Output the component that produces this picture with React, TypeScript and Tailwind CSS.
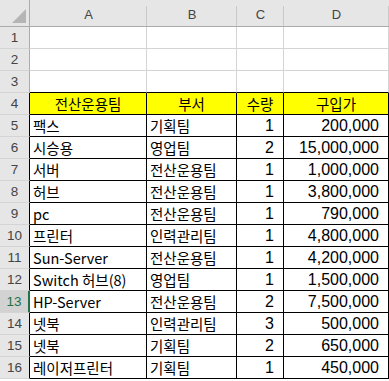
const rows: [string, string, string, string][] = [
  ["팩스", "기획팀", "1", "200,000"],
  ["시승용", "영업팀", "2", "15,000,000"],
  ["서버", "전산운용팀", "1", "1,000,000"],
  ["허브", "전산운용팀", "1", "3,800,000"],
  ["pc", "전산운용팀", "1", "790,000"],
  ["프린터", "인력관리팀", "1", "4,800,000"],
  ["Sun-Server", "전산운용팀", "1", "4,200,000"],
  ["Switch 허브(8)", "영업팀", "1", "1,500,000"],
  ["HP-Server", "전산운용팀", "2", "7,500,000"],
  ["넷북", "인력관리팀", "3", "500,000"],
  ["넷북", "기획팀", "2", "650,000"],
  ["레이저프린터", "기획팀", "1", "450,000"],
];

const ko = { fontFamily: '"Noto Sans CJK KR", "Noto Sans", sans-serif' };
const num = { fontFamily: '"Liberation Sans", Arial, sans-serif' };
const head = { fontFamily: '"Liberation Sans", "Noto Sans", sans-serif' };

function RowHead({ n, selected, dark }: { n: number; selected?: boolean; dark?: boolean }) {
  return (
    <div
      style={head}
      className={`h-[22px] flex items-center justify-center border-b border-[#d4d4d4] text-[13.5px] pt-[2px] ${
        selected
          ? "bg-[#d2d2d2] text-[#217346] border-r-2 border-r-[#217346]"
          : `bg-[#e6e6e6] text-[#444] border-r ${dark ? "border-r-black" : "border-r-[#ababab]"}`
      }`}
    >
      {n}
    </div>
  );
}

export default function App() {
  return (
    <div className="w-[389px] h-[381px] bg-white overflow-hidden">
      <div className="grid grid-cols-[30px_117px_90px_47px_105px]">
        {/* column headers */}
        <div className="h-[27px] bg-[#e6e6e6] border-b border-r border-[#ababab] relative">
          <div className="absolute right-[3px] bottom-[3px] w-0 h-0 border-l-[14px] border-l-transparent border-b-[14px] border-b-[#b5b5b5]" />
        </div>
        {["A", "B", "C", "D"].map((c) => (
          <div key={c} className="h-[27px] bg-[#e6e6e6] border-b border-[#ababab] pt-[5px] relative">
            <div className="absolute right-0 top-[6px] bottom-0 w-px bg-[#c8c8c8]" />
            <div style={head} className="text-center text-[13px] text-[#444] leading-[20px]">
              {c}
            </div>
          </div>
        ))}

        {/* empty rows 1-3 */}
        {[1, 2, 3].map((n) => (
          <div key={n} className="contents">
            <RowHead n={n} />
            {[0, 1, 2, 3].map((i) => (
              <div
                key={i}
                className={`h-[22px] border-r border-[#d4d4d4] border-b ${n === 3 ? "border-b-black" : ""}`}
              />
            ))}
          </div>
        ))}

        {/* table header row 4 */}
        <RowHead n={4} dark />
        {["전산운용팀", "부서", "수량", "구입가"].map((t) => (
          <div
            key={t}
            style={ko}
            className="h-[22px] bg-[#ffff00] border-r border-b border-black flex items-end justify-center text-[14.5px] leading-[20px] text-black"
          >
            {t}
          </div>
        ))}

        {/* data rows */}
        {rows.map((r, idx) => {
          const n = idx + 5;
          return (
            <div key={n} className="contents">
              <RowHead n={n} selected={n === 13} dark />
              <div
                style={ko}
                className="h-[22px] border-r border-b border-black flex items-end pl-[3px] text-[14.5px] leading-[20px] text-black whitespace-nowrap"
              >
                {r[0]}
              </div>
              <div
                style={ko}
                className="h-[22px] border-r border-b border-black flex items-end pl-[3px] text-[14.5px] leading-[20px] text-black whitespace-nowrap"
              >
                {r[1]}
              </div>
              <div
                style={num}
                className="h-[22px] border-r border-b border-black flex items-end justify-end pr-[9px] text-[16px] leading-[20px] text-black"
              >
                {r[2]}
              </div>
              <div
                style={num}
                className="h-[22px] border-r border-b border-black flex items-end justify-end pr-[9px] text-[16px] leading-[20px] text-black"
              >
                {r[3]}
              </div>
            </div>
          );
        })}
      </div>
    </div>
  );
}
